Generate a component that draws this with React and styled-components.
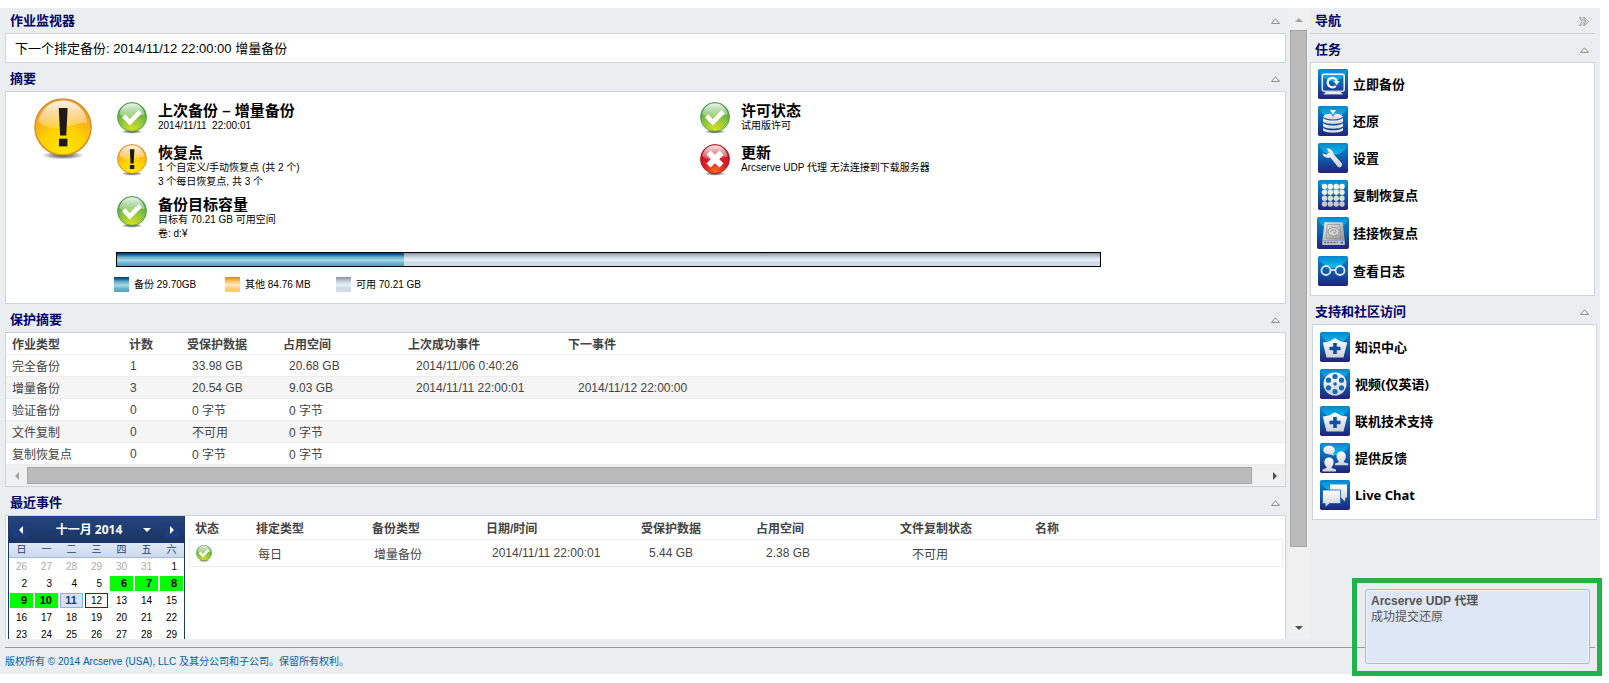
import React from 'react';
import styled, { createGlobalStyle, css } from 'styled-components';

const GlobalStyle = createGlobalStyle`
  * {
    box-sizing: border-box;
  }

  body {
    margin: 0;
    background: #fff;
    color: #000;
    font-family: "Liberation Sans", "Noto Sans CJK SC", sans-serif;
    font-size: 12px;
  }

  button {
    padding: 0;
    border: 0;
    background: none;
    color: inherit;
    font: inherit;
    cursor: pointer;
  }

  svg {
    display: block;
  }
`;

const Page = styled.div`
  display: flex;
  flex-direction: column;
  height: 100vh;
  padding: 8px 9px 9px 0;
`;

const Shell = styled.div`
  flex: 1;
  min-height: 0;
  display: flex;
  flex-direction: column;
  background: #eaeef1;
`;

const Workspace = styled.div`
  flex: 1;
  min-height: 0;
  display: flex;
`;

const Main = styled.main`
  flex: 1;
  min-width: 0;
  display: flex;
  flex-direction: column;
  overflow: hidden;
  padding: 0 2px 0 5px;
`;

const Sidebar = styled.aside`
  width: 291px;
  padding: 0 5px 0 1px;
`;

const SectionHeader = styled.header`
  display: flex;
  align-items: center;
  justify-content: space-between;
  padding: ${props => (props.$first ? '1px' : '4px')} 6px 0 5px;
  border-bottom: ${props => (props.$ruled ? '1px solid #cdd5dc' : '0')};
`;

const SectionTitle = styled.h2`
  margin: 0;
  color: #00006b;
  font-size: 13px;
  font-weight: 700;
  line-height: 24px;
`;

const Panel = styled.div`
  border: 1px solid #cdd5dc;
  background: #fff;
`;

const NextBackup = styled(Panel)`
  padding: 2px 9px 0;
  font-size: 13px;
  line-height: 26px;
`;

/* summary */

const SummaryPanel = styled(Panel)`
  display: flex;
  padding: 6px 0 11px;
`;

const OverallStatus = styled.div`
  width: 110px;
  padding-left: 28px;
`;

const SummaryBody = styled.div`
  flex: 1;
  padding-top: 4px;
`;

const StatusGrid = styled.div`
  display: grid;
  grid-template-columns: 1fr 1fr;
  row-gap: 7px;
  margin-right: 3px;
`;

const StatusItem = styled.div`
  grid-column: ${props => props.$column};
  display: flex;
  gap: 11px;
  min-height: 35px;
  padding-left: 1px;
`;

const StatusTitle = styled.h3`
  margin: 0;
  font-size: 15px;
  font-weight: 700;
  line-height: 17px;
`;

const StatusText = styled.p`
  margin: 0;
  font-size: 10px;
  line-height: 14px;
  white-space: pre;
`;

const fills = {
  backup: 'linear-gradient(#003f7c 0, #0f5c94 12%, #5aa6c5 28%, #7abdd3 40%, #a9d8e6 54%, #8cc8dc 66%, #69b2cc 78%, #4fa3c1 100%)',
  other: 'linear-gradient(#d18c22 0, #eaa53a 14%, #ffc469 30%, #ffe6bf 50%, #ffe0ad 62%, #ffcb7c 76%, #ffc66e 100%)',
  free: 'linear-gradient(#868c9a 0, #a4acb8 12%, #c6d1db 30%, #dce8f1 44%, #e4eff8 58%, #cfdbe4 72%, #d3dfe8 100%)',
};

const CapacityBar = styled.div`
  display: flex;
  height: 15px;
  margin: 11px 184px 10px 0;
  border: 1px solid #000;
  background: ${fills.free};
`;

const CapacityFill = styled.div`
  background: ${fills.backup};
`;

const Legend = styled.ul`
  display: grid;
  grid-template-columns: repeat(3, 111px);
  margin: 0 0 0 -2px;
  padding: 0;
  list-style: none;
`;

const LegendItem = styled.li`
  display: flex;
  align-items: center;
  gap: 5px;
  font-size: 10px;
  line-height: 15px;
`;

const Swatch = styled.span`
  width: 15px;
  height: 15px;
  background: ${props => fills[props.$kind]};
`;

/* tables */

const DataTable = styled.table`
  width: 100%;
  table-layout: fixed;
  border-collapse: separate;
  border-spacing: 0;
  color: #444;
  font-size: 12px;

  th,
  td {
    overflow: hidden;
    padding: 0 0 0 6px;
    border-bottom: 1px solid #ededed;
    text-align: left;
    white-space: nowrap;
  }
`;

const ProtectionTable = styled(DataTable)`
  th,
  td {
    height: 22px;
  }

  tbody tr:nth-child(even) {
    background: #f5f5f5;
  }
`;

const EventTable = styled(DataTable)`
  th {
    height: 24px;
  }

  td {
    height: 27px;
  }

  td:first-child {
    border-left: 1px solid #ededed;
  }

  td:last-child {
    border-right: 1px solid #ededed;
  }
`;

const CellContent = styled.div`
  padding-left: ${props => props.$indent}px;
`;

/* scroll bars */

const VerticalBar = styled.div`
  display: flex;
  flex-direction: column;
  width: 21px;
  padding: 1px 2px;
  background: #f0f0f0;
`;

const HorizontalBar = styled.div`
  display: flex;
  height: 21px;
  padding: 2px 0;
  background: #f0f0f0;
`;

const ScrollArrow = styled.button`
  display: flex;
  align-items: center;
  justify-content: center;
  flex: 0 0 21px;
  color: ${props => (props.$idle ? '#a3a3a3' : '#505050')};
`;

const Track = styled.div`
  flex: 1;
  display: flex;
  flex-direction: ${props => (props.$vertical ? 'column' : 'row')};
`;

const Thumb = styled.div`
  flex: 0 0 ${props => props.$size}%;
  border: 1px solid #a6a6a6;
  background: #bbb;
`;

/* recent events */

const RecentPanel = styled(Panel)`
  flex: 1;
  min-height: 0;
  display: flex;
  align-items: stretch;
  gap: 4px;
  padding: 0 2px;
  border-bottom: 0;
`;

const Calendar = styled.div`
  flex: 0 0 177px;
  border: 1px solid #1b376c;
  border-width: 0 1px;
`;

const CalendarHeader = styled.div`
  display: flex;
  align-items: center;
  height: 27px;
  padding: 0 5px;
  background: linear-gradient(#24457e, #1a3466);
  color: #fff;
  font-family: "Open Sans", "Noto Sans CJK SC", sans-serif;
  font-size: 12px;
  font-weight: 700;
`;

const MonthArrow = styled.button`
  display: flex;
  align-items: center;
  justify-content: center;
  width: 14px;
  height: 14px;
  background: #1e3c80;
`;

const MonthButton = styled.button`
  flex: 1;
  display: flex;
  align-items: center;
  justify-content: center;
  gap: 21px;
  padding-left: 14px;
  line-height: 24px;
`;

const CalendarTable = styled.table`
  width: 100%;
  table-layout: fixed;
  border-collapse: separate;
  border-spacing: 0;

  th {
    height: 15px;
    padding: 0;
    border-bottom: 1px solid #a3bad9;
    background: linear-gradient(#dfe9f7, #cbdaee);
    color: #233d6d;
    font-size: 10px;
    font-weight: 400;
    line-height: 14px;
  }

  td {
    height: 17px;
    padding: 1px;
  }
`;

const dayStyles = {
  muted: css`
    color: #aaa;
  `,
  backup: css`
    background: #0f0;
    font-size: 11px;
    font-weight: 700;
  `,
  selected: css`
    border-color: #8db2e3;
    background: #d6e2f3;
    color: #233d6d;
    font-size: 11px;
    font-weight: 700;
  `,
  today: css`
    border-color: #8b0000;
  `,
};

const Day = styled.button`
  display: block;
  width: 100%;
  height: 15px;
  padding-right: 5px;
  border: 1px solid transparent;
  font-size: 10px;
  line-height: 13px;
  text-align: right;
  ${props => dayStyles[props.$kind]}
`;

const EventArea = styled.div`
  flex: 1;
  min-width: 0;
`;

/* sidebar */

const NavPanel = styled(Panel)`
  display: flex;
  flex-direction: column;
  gap: 7px;
  padding: ${props => (props.$shifted ? '7px 7px 9px' : '6px 7px 9px')};
  margin: ${props => (props.$shifted ? '0 -2px 0 2px' : '0')};
`;

const NavLink = styled.a`
  display: flex;
  align-items: center;
  gap: 5px;
  color: #000;
  font-family: "Noto Sans", "Noto Sans CJK SC", sans-serif;
  font-size: 13px;
  font-weight: 700;
  line-height: 30px;
  text-decoration: none;
`;

const IconSlot = styled.span`
  display: flex;
  justify-content: center;
  width: 30px;

  svg {
    flex: none;
  }
`;

const ToggleButton = styled.button`
  display: flex;
  align-items: center;
  height: 14px;
`;

/* footer and toast */

const Footer = styled.footer`
  margin: 8px 5px 0;
  padding: 3px 0 2px;
  border-top: 1px solid #999;
  color: #0060ae;
  font-size: 10px;
  line-height: 21px;
`;

const ToastFrame = styled.div`
  position: fixed;
  right: 7px;
  bottom: 7px;
  width: 250px;
  padding: 6px 7px 7px 8px;
  border: 5px solid #22b14c;
`;

const Toast = styled.div`
  height: 75px;
  padding: 3px 5px;
  border: 1px solid #99bbe8;
  border-radius: 3px;
  background: #dee7f6;
  box-shadow: inset 0 0 0 1px #f0f5fc;
  color: #555;
  line-height: 16px;
`;

const ToastTitle = styled.div`
  font-weight: 700;
`;

const IconDefs = () => (
  <svg width="0" height="0" aria-hidden="true">
    <defs>
      <linearGradient id="tile" x1="0" y1="0" x2="0" y2="1">
        <stop offset="0" stopColor="#0a86cb" />
        <stop offset="0.5" stopColor="#0b5fae" />
        <stop offset="1" stopColor="#23217a" />
      </linearGradient>
      <linearGradient id="tileGlow" x1="0" y1="0" x2="0" y2="1">
        <stop offset="0" stopColor="#078bcf" />
        <stop offset="1" stopColor="#0cbdf0" />
      </linearGradient>
      <linearGradient id="glyph" x1="0" y1="0" x2="0" y2="1">
        <stop offset="0" stopColor="#fff" />
        <stop offset="1" stopColor="#cfcfd6" />
      </linearGradient>
      <linearGradient id="drive" x1="0" y1="0" x2="1" y2="1">
        <stop offset="0" stopColor="#f0f0f0" />
        <stop offset="1" stopColor="#8f8f8f" />
      </linearGradient>
      <radialGradient id="okOrb" cx="0.5" cy="0.95" r="0.8">
        <stop offset="0" stopColor="#d9e021" />
        <stop offset="0.55" stopColor="#8cc63f" />
        <stop offset="1" stopColor="#4fa541" />
      </radialGradient>
      <radialGradient id="warnOrb" cx="0.5" cy="0.9" r="0.8">
        <stop offset="0" stopColor="#ffe600" />
        <stop offset="0.5" stopColor="#fdd000" />
        <stop offset="0.8" stopColor="#fbad1c" />
        <stop offset="1" stopColor="#f39a1d" />
      </radialGradient>
      <radialGradient id="errorOrb" cx="0.5" cy="0.95" r="0.75">
        <stop offset="0" stopColor="#f7701d" />
        <stop offset="0.5" stopColor="#e5202a" />
        <stop offset="1" stopColor="#c1141f" />
      </radialGradient>
      <linearGradient id="gloss" x1="0" y1="0" x2="0" y2="1">
        <stop offset="0" stopColor="#fff" stopOpacity="0.9" />
        <stop offset="1" stopColor="#fff" stopOpacity="0.2" />
      </linearGradient>
      <radialGradient id="shade">
        <stop offset="0" stopColor="#000" stopOpacity="0.8" />
        <stop offset="1" stopColor="#000" stopOpacity="0" />
      </radialGradient>
    </defs>
  </svg>
);

const orbs = {
  ok: { fill: 'url(#okOrb)', rim: '#3f9a3c' },
  warn: { fill: 'url(#warnOrb)', rim: '#d9912a' },
  error: { fill: 'url(#errorOrb)', rim: '#a8141c' },
};

const StatusIcon = ({ kind, width = 30 }) => (
  <svg width={width} height={Math.round(width * 32 / 30)} viewBox="0 0 30 32" role="img" aria-label={kind}>
    <ellipse cx="15" cy="29.6" rx="11" ry="2.2" fill="url(#shade)" />
    <circle cx="15" cy="15" r="14.5" fill={orbs[kind].fill} stroke={orbs[kind].rim} strokeWidth="0.8" />
    <path d="M15 1.2C8.5 1.2 3.4 5.7 2.3 12c3.5 3.2 8 4.2 13.5 3.2 5-1 8.5-2.6 11.8-2.5C26.8 6 21.6 1.2 15 1.2z" fill="url(#gloss)" />
    {kind === 'ok' && <path d="M5 15.5l3.200-3.200 4.600 4.600 8.600-9 3.400 3.400-12 12.200z" fill="#fff" />}
    {kind === 'warn' && (
      <g fill="#1f1a17">
        <path d="M12.800 5.200h4.600l-.7 14.200h-3.200z" />
        <path d="M12.900 21h4.400v4h-4.400z" />
      </g>
    )}
    {kind === 'error' && (
      <path d="M6.500 10.500l4-4 4.500 4.300 4.500-4.300 4 4-4.300 4.500 4.300 4.500-4 4-4.500-4.300-4.500 4.300-4-4 4.300-4.500z" fill="#fff" />
    )}
  </svg>
);

const dots = [6.500, 12.300, 18.200, 24];

const glyphs = {
  backup: (
    <>
      <rect x="4.300" y="5.300" width="21.900" height="16.900" rx="2" fill="none" stroke="url(#glyph)" strokeWidth="1.600" />
      <path d="M17.800 16.900a4.700 4.700 0 1 1 1-4.900" fill="none" stroke="#fff" strokeWidth="2.200" />
      <path d="M15.300 12h6.400l-2.900 4.200z" fill="#fff" />
      <path d="M8 23h14.500l3 2.600H5z" fill="url(#glyph)" />
    </>
  ),
  restore: (
    <g fill="url(#glyph)">
      <path d="M12 4h6l-3 5z" />
      <path d="M5 10.500c1.500-2 5-2.700 7.500-2.700L15 11l2.500-3.200c2.500 0 6 .7 7.500 2.700-2 2.300-6 3-10 3s-8-.7-10-3z" />
      <path d="M5 12.300c2 1.700 6 2.300 10 2.300s8-.6 10-2.300v3.500c-2 1.700-6 2.200-10 2.200s-8-.5-10-2.200z" />
      <path d="M5 17.200c2 1.700 6 2.300 10 2.300s8-.6 10-2.300v3.300c-2 1.700-6 2.200-10 2.200s-8-.5-10-2.200z" />
      <path d="M5 21.900c2 1.700 6 2.300 10 2.300s8-.6 10-2.300v2.600c-2 1.700-6 2.200-10 2.200s-8-.5-10-2.200z" />
    </g>
  ),
  settings: (
    <path d="M8.800 5.500c3.600-.3 6.600 2.200 6.800 5.800l8 8.800c1.600 2-.8 5.500-3.500 4l-7.800-9.600c-3.600 1.200-7.200-.5-8-4.300l4.200 1.500 2.600-2.300z" fill="url(#glyph)" />
  ),
  copy: (
    <g>
      {dots.map((y, row) => dots.map(x => (
        <circle key={`${x}-${y}`} cx={x} cy={y} r="2.700" fill={['#fff', '#ececf0', '#dcdce2', '#c6c6ce'][row]} />
      )))}
    </g>
  ),
  mount: (
    <>
      <path d="M7 5h17l2 17H5z" fill="url(#drive)" />
      <path d="M5 22h21v4.200H5z" fill="#c9c9c9" />
      <path d="M6.500 24h13" stroke="#666" strokeWidth="1.400" strokeDasharray="2 1" />
      <path d="M22 24h2.500" stroke="#2b62b0" strokeWidth="1.600" />
      <path d="M9.500 7h12l1.200 13H8.500z" fill="none" stroke="#888" strokeWidth="0.600" />
      <ellipse cx="15.500" cy="13.800" rx="5.200" ry="4" fill="#d5d5d5" stroke="#8a8a8a" strokeWidth="0.800" />
      <path d="M12.800 14a2.600 1.900 0 0 1 5.200 0c0 1.500-2.600 1.500-2.600 0" fill="none" stroke="#8a8a8a" strokeWidth="0.800" />
    </>
  ),
  logs: (
    <g fill="none" stroke="#e4e4ea" strokeWidth="1.800">
      <circle cx="8" cy="14.500" r="4.500" />
      <circle cx="22" cy="14.500" r="4.500" />
      <path d="M12.500 14h5" />
    </g>
  ),
  care: (
    <>
      <path d="M15 6.200l5.800 3.200 6.400 1.200-3.700 14.800h-17L2.800 10.600l6.400-1.200z" fill="url(#glyph)" />
      <path d="M13.200 11h3.600v3.700h3.700v3.600h-3.700V22h-3.600v-3.700H9.500v-3.600h3.700z" fill="#0b4f9e" />
    </>
  ),
  video: (
    <>
      <circle cx="15" cy="15" r="11.500" fill="url(#glyph)" />
      <g fill="#0c6cb8">
        <circle cx="15" cy="7.500" r="2.600" />
        <circle cx="21.500" cy="11.200" r="2.600" />
        <circle cx="21.500" cy="18.800" r="2.600" />
        <circle cx="15" cy="22.500" r="2.600" />
        <circle cx="8.500" cy="18.800" r="2.600" />
        <circle cx="8.500" cy="11.200" r="2.600" />
        <circle cx="15" cy="15" r="1.800" />
      </g>
    </>
  ),
  feedback: (
    <g fill="url(#glyph)">
      <path d="M9 2.700c3.300 0 5.800 1.900 5.800 4.400 0 1.500-.8 2.600-1.800 3.400l1.300 2.500-3.600-1.600c-4 .5-7.400-1.500-7.400-4.300 0-2.500 2.500-4.400 5.700-4.400z" />
      <path d="M21.200 8.500c3 0 4.800 2.200 4.600 5.200-.1 1.900-.9 3.400-1.900 4.200v1.300l4.300 1.300v1.700H15v-1.700l3.600-1.300v-1.300c-1-.8-1.900-2.300-2-4.200-.2-3 1.700-5.200 4.600-5.200z" />
      <path d="M9 14.500c3 0 4.800 2.200 4.600 5.200-.1 1.900-.9 3.200-1.900 4v1.300l4.300 1.500v2H2.500v-2l3.900-1.500v-1.300c-1-.8-1.900-2.100-2-4-.2-3 1.700-5.200 4.600-5.200z" />
    </g>
  ),
  chat: (
    <g fill="url(#glyph)">
      <path d="M10 4.500h17v13h-1.500l-.6 4-4-4H10z" />
      <path d="M2.500 10h18v13.500H9.500L5.500 27l-.4-3.500H2.500z" stroke="#0b5fae" strokeWidth="0.800" />
    </g>
  ),
};

const TileIcon = ({ name, size = 30 }) => (
  <IconSlot>
    <svg width={size} height={size} viewBox="0 0 30 30" aria-hidden="true">
      <rect width="30" height="30" rx="1.800" fill="url(#tile)" />
      <path d="M1 1h28v2c-3 5-8 9-14 9S4 8 1 3z" fill="url(#tileGlow)" />
      {glyphs[name]}
    </svg>
  </IconSlot>
);

const CollapseToggle = ({ label }) => (
  <ToggleButton type="button" aria-label={`折叠 ${label}`}>
    <svg width="9" height="6" viewBox="0 0 9 6">
      <path d="M.5 5.400L4.500.8l4 4.600z" fill="#f4f4f4" stroke="#808080" strokeWidth="0.900" />
    </svg>
  </ToggleButton>
);

const Arrow = ({ dir, size = 8 }) => {
  const shapes = {
    up: 'M0 6l4-4 4 4z',
    down: 'M0 2h8L4 6z',
    left: 'M6 0v8L2 4z',
    right: 'M2 0l4 4-4 4z',
  };
  return (
    <svg width={size} height={size} viewBox="0 0 8 8" aria-hidden="true">
      <path d={shapes[dir]} fill="currentColor" />
    </svg>
  );
};

const Header = ({ title, first }) => (
  <SectionHeader $first={first}>
    <SectionTitle>{title}</SectionTitle>
    <CollapseToggle label={title} />
  </SectionHeader>
);

const statusItems = [
  { kind: 'ok', column: 1, title: '上次备份 – 增量备份', lines: ['2014/11/11  22:00:01'] },
  { kind: 'ok', column: 2, title: '许可状态', lines: ['试用版许可'] },
  { kind: 'warn', column: 1, title: '恢复点', lines: ['1 个自定义/手动恢复点 (共 2 个)', '3 个每日恢复点, 共 3 个'] },
  { kind: 'error', column: 2, title: '更新', lines: ['Arcserve UDP 代理 无法连接到下载服务器'] },
  { kind: 'ok', column: 1, title: '备份目标容量', lines: ['目标有 70.21 GB 可用空间', '卷: d:¥'] },
];

const capacity = [
  { kind: 'backup', label: '备份 29.70GB' },
  { kind: 'other', label: '其他 84.76 MB' },
  { kind: 'free', label: '可用 70.21 GB' },
];

const usedPercent = 29.2;

const protectionColumns = [
  { title: '作业类型', width: 117, indent: 0 },
  { title: '计数', width: 58, indent: 1 },
  { title: '受保护数据', width: 96, indent: 5 },
  { title: '占用空间', width: 125, indent: 6 },
  { title: '上次成功事件', width: 160, indent: 8 },
  { title: '下一事件', indent: 10 },
];

const protectionRows = [
  ['完全备份', '1', '33.98 GB', '20.68 GB', '2014/11/06 0:40:26', ''],
  ['增量备份', '3', '20.54 GB', '9.03 GB', '2014/11/11 22:00:01', '2014/11/12 22:00:00'],
  ['验证备份', '0', '0 字节', '0 字节', '', ''],
  ['文件复制', '0', '不可用', '0 字节', '', ''],
  ['复制恢复点', '0', '0 字节', '0 字节', '', ''],
];

const eventColumns = [
  { title: '状态', width: 61, indent: 0 },
  { title: '排定类型', width: 116, indent: 2 },
  { title: '备份类型', width: 114, indent: 2 },
  { title: '日期/时间', width: 155, indent: 6 },
  { title: '受保护数据', width: 115, indent: 8 },
  { title: '占用空间', width: 144, indent: 10 },
  { title: '文件复制状态', width: 135, indent: 12 },
  { title: '名称', indent: 0 },
];

const eventRows = [
  [<StatusIcon kind="ok" width={16} />, '每日', '增量备份', '2014/11/11 22:00:01', '5.44 GB', '2.38 GB', '不可用', ''],
];

const weekdays = ['日', '一', '二', '三', '四', '五', '六'];

const weeks = [
  [26, 27, 28, 29, 30, 31, 1],
  [2, 3, 4, 5, 6, 7, 8],
  [9, 10, 11, 12, 13, 14, 15],
  [16, 17, 18, 19, 20, 21, 22],
  [23, 24, 25, 26, 27, 28, 29],
];

const dayKind = (day, week) => {
  if (week === 0 && day > 20) return 'muted';
  if (day >= 6 && day <= 10) return 'backup';
  if (day === 11) return 'selected';
  if (day === 12) return 'today';
  return undefined;
};

const tasks = [
  { icon: 'backup', label: '立即备份' },
  { icon: 'restore', label: '还原' },
  { icon: 'settings', label: '设置' },
  { icon: 'copy', label: '复制恢复点' },
  { icon: 'mount', label: '挂接恢复点', size: 32 },
  { icon: 'logs', label: '查看日志' },
];

const support = [
  { icon: 'care', label: '知识中心' },
  { icon: 'video', label: '视频(仅英语)' },
  { icon: 'care', label: '联机技术支持' },
  { icon: 'feedback', label: '提供反馈' },
  { icon: 'chat', label: 'Live Chat' },
];

const Grid = ({ as: Table, columns, rows }) => (
  <Table>
    <colgroup>
      {columns.map(col => <col key={col.title} width={col.width} />)}
    </colgroup>
    <thead>
      <tr>
        {columns.map(col => <th key={col.title} scope="col">{col.title}</th>)}
      </tr>
    </thead>
    <tbody>
      {rows.map((row, i) => (
        <tr key={i}>
          {row.map((cell, j) => (
            <td key={j}>
              <CellContent $indent={columns[j].indent}>{cell}</CellContent>
            </td>
          ))}
        </tr>
      ))}
    </tbody>
  </Table>
);

const Summary = () => (
  <SummaryPanel>
    <OverallStatus>
      <StatusIcon kind="warn" width={58} />
    </OverallStatus>
    <SummaryBody>
      <StatusGrid>
        {statusItems.map(item => (
          <StatusItem key={item.title} $column={item.column}>
            <StatusIcon kind={item.kind} />
            <div>
              <StatusTitle>{item.title}</StatusTitle>
              {item.lines.map(line => <StatusText key={line}>{line}</StatusText>)}
            </div>
          </StatusItem>
        ))}
      </StatusGrid>
      <CapacityBar>
        <CapacityFill style={{ width: `${usedPercent}%` }} />
      </CapacityBar>
      <Legend>
        {capacity.map(item => (
          <LegendItem key={item.kind}>
            <Swatch $kind={item.kind} />
            {item.label}
          </LegendItem>
        ))}
      </Legend>
    </SummaryBody>
  </SummaryPanel>
);

const MonthCalendar = () => (
  <Calendar>
    <CalendarHeader>
      <MonthArrow type="button" aria-label="上个月"><Arrow dir="left" /></MonthArrow>
      <MonthButton type="button">
        十一月 2014
        <Arrow dir="down" />
      </MonthButton>
      <MonthArrow type="button" aria-label="下个月"><Arrow dir="right" /></MonthArrow>
    </CalendarHeader>
    <CalendarTable>
      <thead>
        <tr>{weekdays.map(day => <th key={day} scope="col">{day}</th>)}</tr>
      </thead>
      <tbody>
        {weeks.map((week, i) => (
          <tr key={i}>
            {week.map(day => (
              <td key={day}><Day type="button" $kind={dayKind(day, i)}>{day}</Day></td>
            ))}
          </tr>
        ))}
      </tbody>
    </CalendarTable>
  </Calendar>
);

const NavList = ({ items, shifted }) => (
  <NavPanel as="nav" $shifted={shifted}>
    {items.map(item => (
      <NavLink key={item.label} href="#">
        <TileIcon name={item.icon} size={item.size} />
        {item.label}
      </NavLink>
    ))}
  </NavPanel>
);

const App = () => {
  return (
    <Page>
      <GlobalStyle />
      <IconDefs />
      <Shell>
        <Workspace>
          <Main>
            <Header title="作业监视器" first />
            <NextBackup>下一个排定备份: 2014/11/12 22:00:00 增量备份</NextBackup>

            <Header title="摘要" />
            <Summary />

            <Header title="保护摘要" />
            <Panel>
              <Grid as={ProtectionTable} columns={protectionColumns} rows={protectionRows} />
              <HorizontalBar>
                <ScrollArrow type="button" aria-label="向左滚动" $idle><Arrow dir="left" /></ScrollArrow>
                <Track><Thumb $size={99} /></Track>
                <ScrollArrow type="button" aria-label="向右滚动"><Arrow dir="right" /></ScrollArrow>
              </HorizontalBar>
            </Panel>

            <Header title="最近事件" />
            <RecentPanel>
              <MonthCalendar />
              <EventArea>
                <Grid as={EventTable} columns={eventColumns} rows={eventRows} />
              </EventArea>
            </RecentPanel>
          </Main>

          <VerticalBar>
            <ScrollArrow type="button" aria-label="向上滚动" $idle><Arrow dir="up" /></ScrollArrow>
            <Track $vertical><Thumb $size={88} /></Track>
            <ScrollArrow type="button" aria-label="向下滚动"><Arrow dir="down" /></ScrollArrow>
          </VerticalBar>

          <Sidebar>
            <SectionHeader $first $ruled>
              <SectionTitle>导航</SectionTitle>
              <ToggleButton type="button" aria-label="收起导航">
                <svg width="10" height="9" viewBox="0 0 10 9">
                  <path d="M.5.5h1.300l4 4-4 4H.5l2.500-4zM4.500.5h1.300l3.800 4-3.800 4H4.500l2.500-4z" fill="#f4f4f4" stroke="#808080" strokeWidth="0.800" />
                </svg>
              </ToggleButton>
            </SectionHeader>
            <Header title="任务" />
            <NavList items={tasks} />
            <Header title="支持和社区访问" />
            <NavList items={support} shifted />
          </Sidebar>
        </Workspace>
        <Footer>版权所有 © 2014 Arcserve (USA), LLC 及其分公司和子公司。保留所有权利。</Footer>
      </Shell>

      <ToastFrame>
        <Toast role="status">
          <ToastTitle>Arcserve UDP 代理</ToastTitle>
          成功提交还原
        </Toast>
      </ToastFrame>
    </Page>
  );
};

export default App;
